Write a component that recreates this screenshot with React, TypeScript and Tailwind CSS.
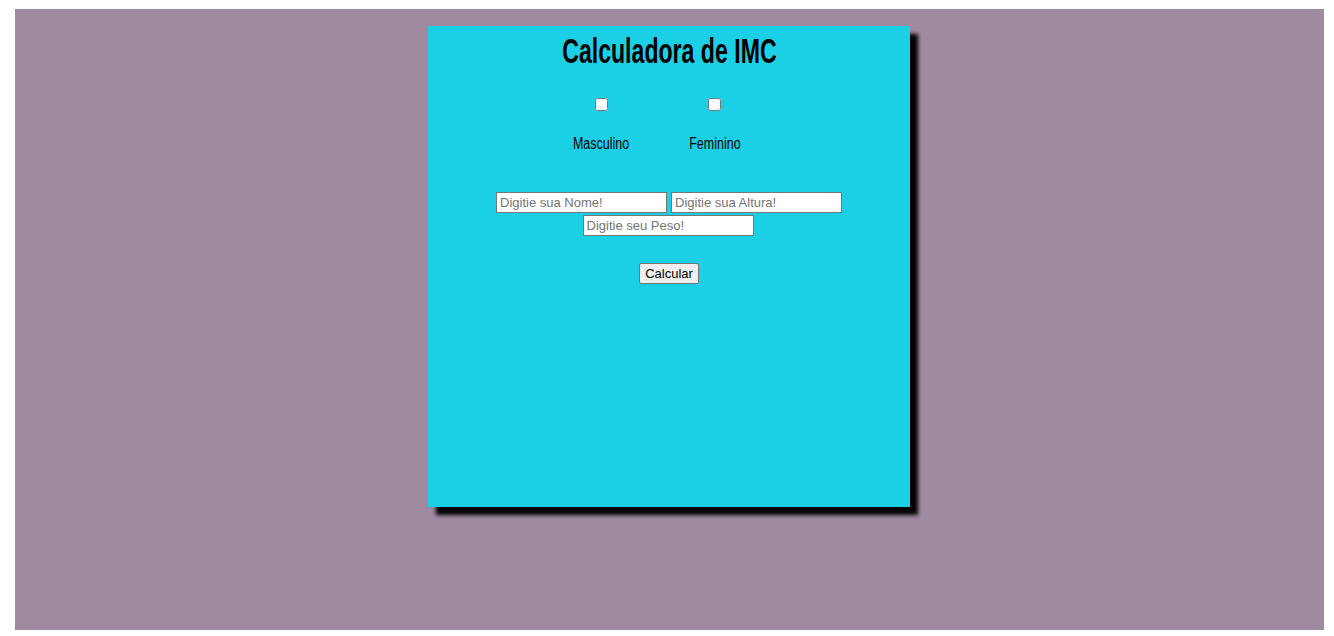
export default function App() {
    const narrow = "inline-block font-['Liberation_Sans',Arial,sans-serif] text-black"

    return (
        <div className="h-[636px] w-[1334px] bg-white pt-[9px] pl-[15px] pr-[10px] pb-[6px]">
            <div className="h-full w-full bg-[#9f8aa0] pt-[17px] pr-[1px]">
                <div className="mx-auto flex h-[481px] w-[482px] flex-col items-center bg-[#1bcfe5] shadow-[8px_8px_4px_#000]">
                    <h1 className={`${narrow} mt-[5px] scale-x-[0.66] text-[35px] font-bold leading-[40px]`}>
                        Calculadora de IMC
                    </h1>

                    <div className="mt-[27px] flex gap-[55px] pr-[22px]">
                        <label className="flex w-[58px] flex-col items-center gap-[24px]">
                            <input type="checkbox" className="h-[13px] w-[13px]" />
                            <span className={`${narrow} scale-x-[0.78] text-[16px] leading-[18px]`}>Masculino</span>
                        </label>
                        <label className="flex w-[58px] flex-col items-center gap-[24px]">
                            <input type="checkbox" className="h-[13px] w-[13px]" />
                            <span className={`${narrow} scale-x-[0.78] text-[16px] leading-[18px]`}>Feminino</span>
                        </label>
                    </div>

                    <div className="mt-[39px] flex flex-col items-center gap-[2px] font-['Liberation_Sans',Arial,sans-serif] text-[13px]">
                        <div className="flex gap-[4px]">
                            <input
                                placeholder="Digitie sua Nome!"
                                className="h-[21px] w-[171px] border border-[#767676] bg-white px-[3px] placeholder:text-[#757575]"
                            />
                            <input
                                placeholder="Digitie sua Altura!"
                                className="h-[21px] w-[171px] border border-[#767676] bg-white px-[3px] placeholder:text-[#757575]"
                            />
                        </div>
                        <input
                            placeholder="Digitie seu Peso!"
                            className="mr-[2px] h-[21px] w-[171px] border border-[#767676] bg-white px-[3px] placeholder:text-[#757575]"
                        />
                    </div>

                    <button className="mt-[27px] h-[21px] w-[60px] rounded-[2px] border border-[#767676] bg-[#efefef] font-['Liberation_Sans',Arial,sans-serif] text-[13px] text-black">
                        Calcular
                    </button>
                </div>
            </div>
        </div>
    )
}
